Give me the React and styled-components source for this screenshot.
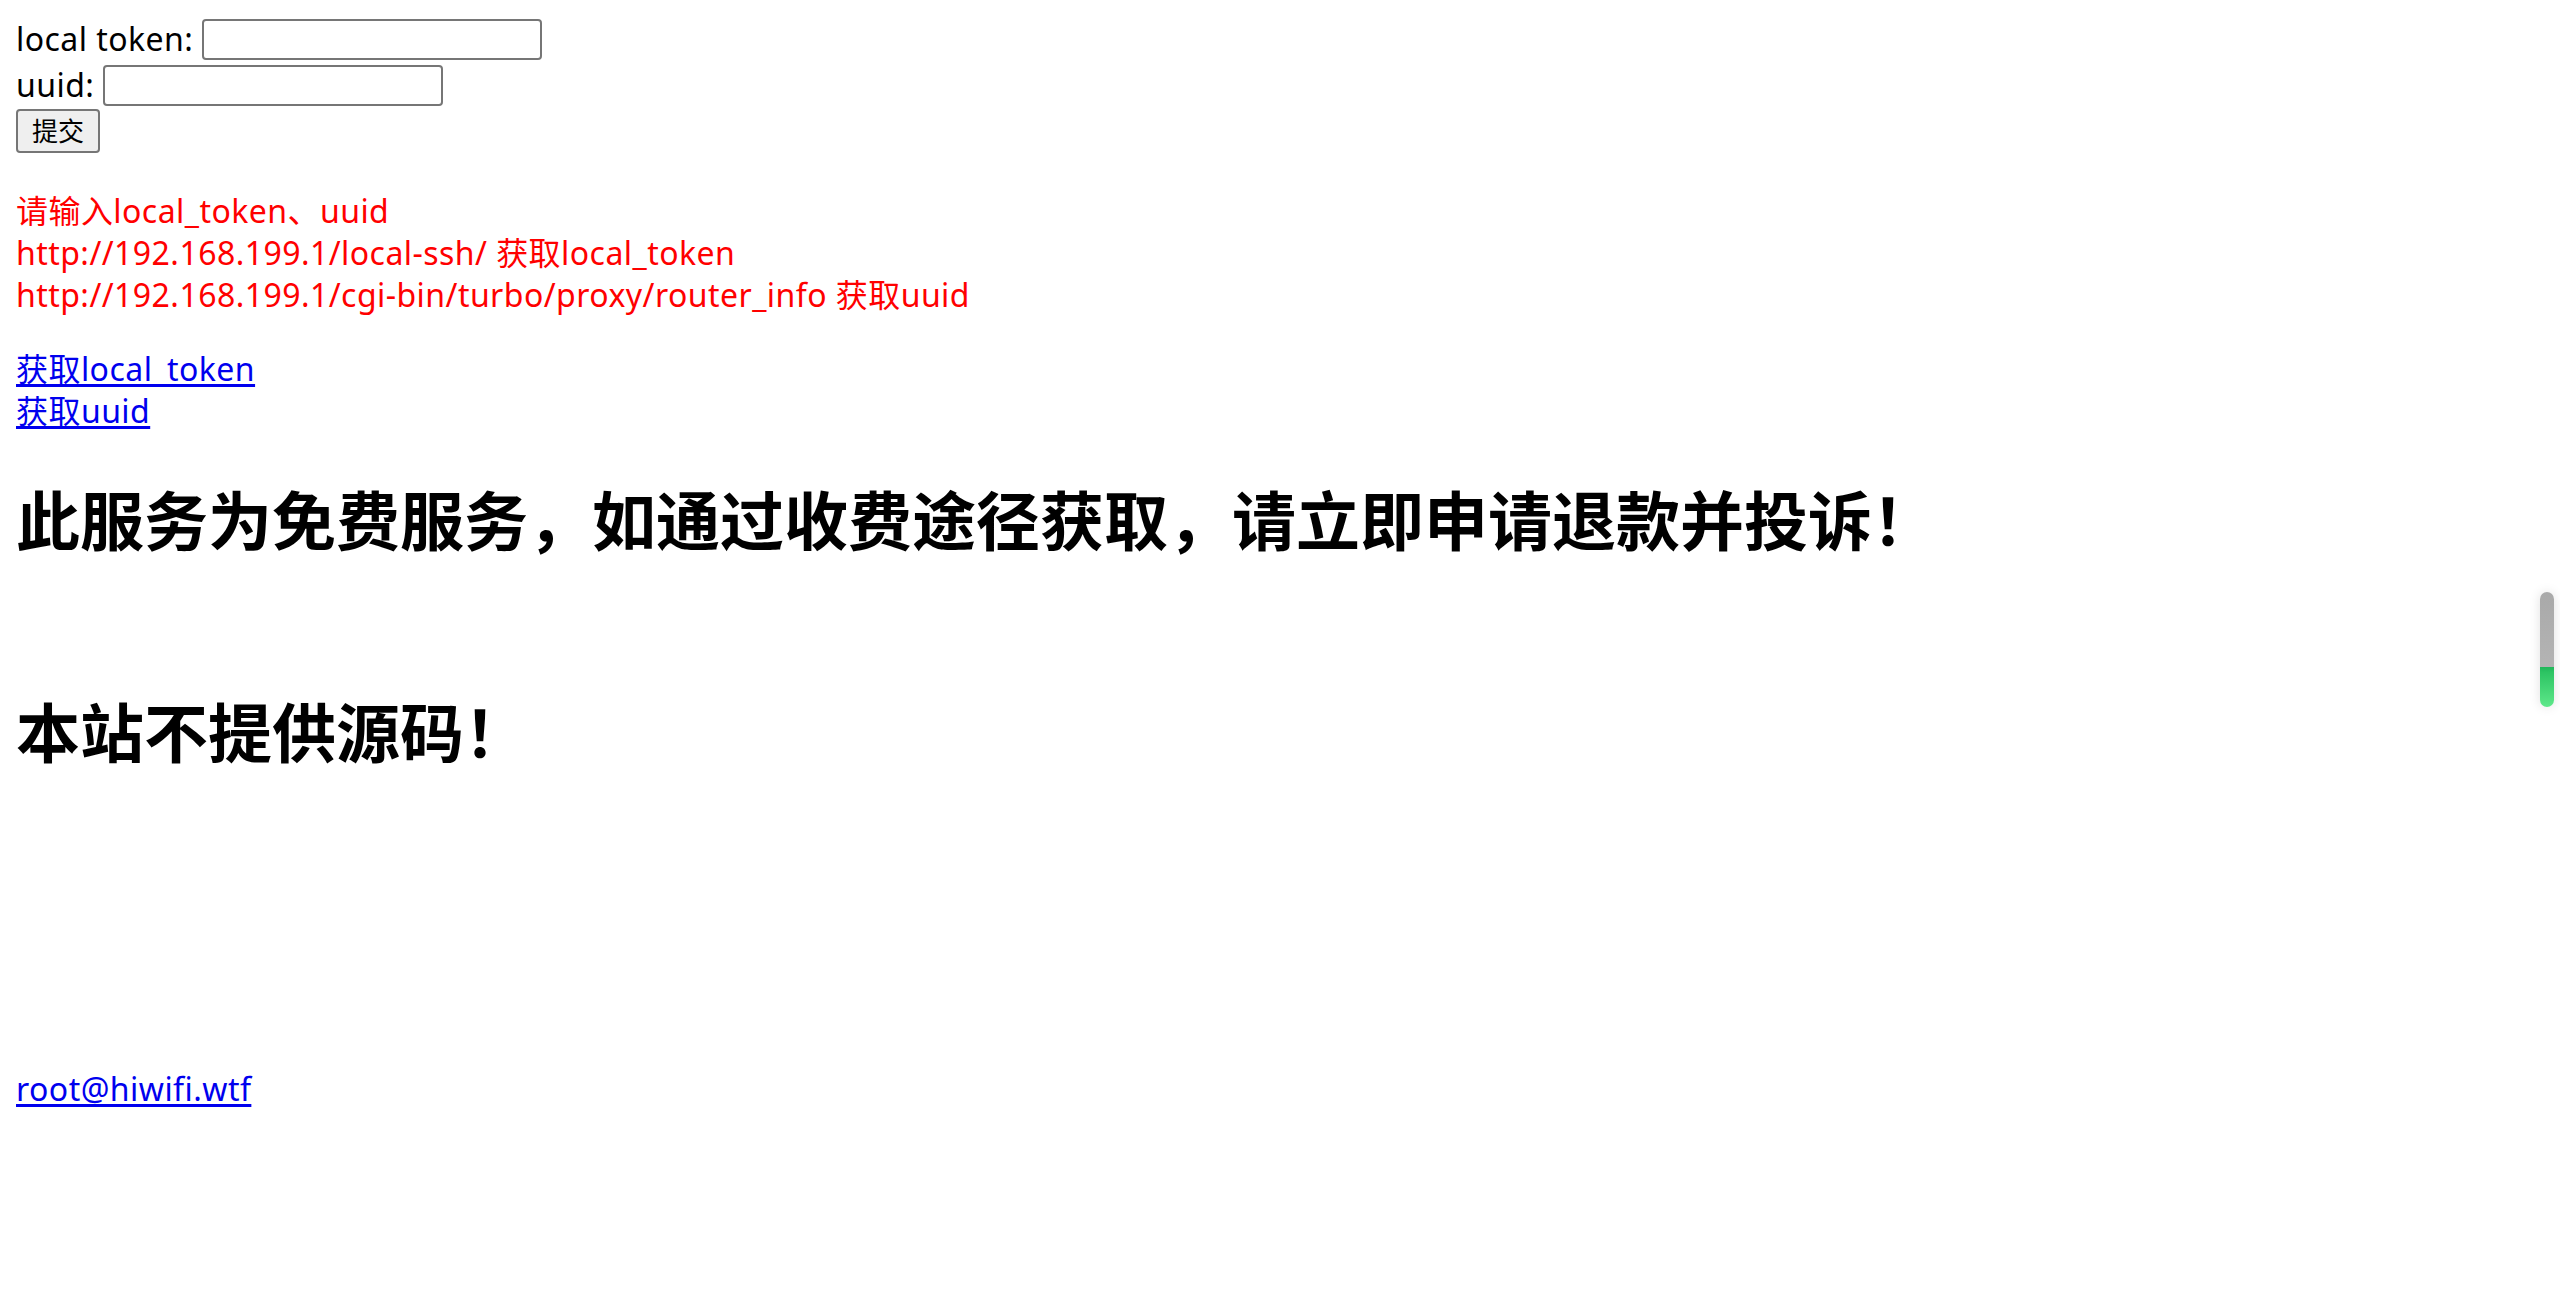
import React from 'react';
import styled, { createGlobalStyle } from 'styled-components';

const FONT = `"Noto Sans", "Noto Sans CJK SC", sans-serif`;

const GlobalStyle = createGlobalStyle`
  html, body {
    margin: 0;
    background: #fff;
  }
  body {
    padding: 16px;
    font-family: ${FONT};
    font-size: 32px;
    line-height: 42px;
    letter-spacing: 0.45px;
    color: #000;
  }
`;

const Form = styled.form`
  display: flex;
  flex-direction: column;
`;

const Row = styled.div`
  display: flex;
  align-items: center;
  height: 46px;
`;

const Label = styled.label`
  white-space: pre;
`;

const TextInput = styled.input`
  box-sizing: border-box;
  width: 340px;
  height: 41px;
  margin-left: 9px;
  border: 2px solid #767676;
  border-radius: 4px;
  padding: 2px 4px;
  font-size: 26px;
  background: #fff;
`;

const Submit = styled.button`
  box-sizing: border-box;
  height: 44px;
  padding: 0 14px;
  border: 2px solid #767676;
  border-radius: 4px;
  background: #efefef;
  font-family: ${FONT};
  font-size: 26px;
  line-height: 1;
  color: #000;
`;

const Notice = styled.p`
  margin: 36px 0 0;
  color: #ff0000;
`;

const Links = styled.p`
  margin: 32px 0 0;
`;

const Link = styled.a`
  color: #0000ee;
  text-decoration: underline;
  text-underline-offset: 3px;
`;

const Heading = styled.h1`
  margin: ${p => p.$top}px 0 0;
  font-size: 64px;
  line-height: 84px;
  font-weight: 700;
  letter-spacing: 0;
`;

const Footer = styled.p`
  margin: 293px 0 0;
`;

// floating progress capsule pinned to the right edge
const Widget = styled.div`
  position: fixed;
  right: 6px;
  top: 592px;
  width: 14px;
  height: 115px;
  border-radius: 7px;
  background: linear-gradient(to bottom, #a9a9a9 0, #b4b4b4 65%, #1fb65a 65%, #2dc463 70%, #5ee88a 100%);
  box-shadow: 0 0 12px rgba(0, 0, 0, 0.12);
`;

export default function App() {
  return (
    <>
      <GlobalStyle />
      <Form onSubmit={e => e.preventDefault()}>
        <Row>
          <Label>local token:</Label>
          <TextInput type="text" />
        </Row>
        <Row>
          <Label>uuid:</Label>
          <TextInput type="text" />
        </Row>
        <Row>
          <Submit type="submit">提交</Submit>
        </Row>
      </Form>
      <Notice>
        请输入local_token、uuid<br />
        http://192.168.199.1/local-ssh/ 获取local_token<br />
        http://192.168.199.1/cgi-bin/turbo/proxy/router_info 获取uuid
      </Notice>
      <Links>
        <Link href="#">获取local_token</Link><br />
        <Link href="#">获取uuid</Link>
      </Links>
      <Heading $top={47}>此服务为免费服务，如通过收费途径获取，请立即申请退款并投诉！</Heading>
      <Heading $top={128}>本站不提供源码！</Heading>
      <Footer>
        <Link href="#">root@hiwifi.wtf</Link>
      </Footer>
      <Widget />
    </>
  );
}
